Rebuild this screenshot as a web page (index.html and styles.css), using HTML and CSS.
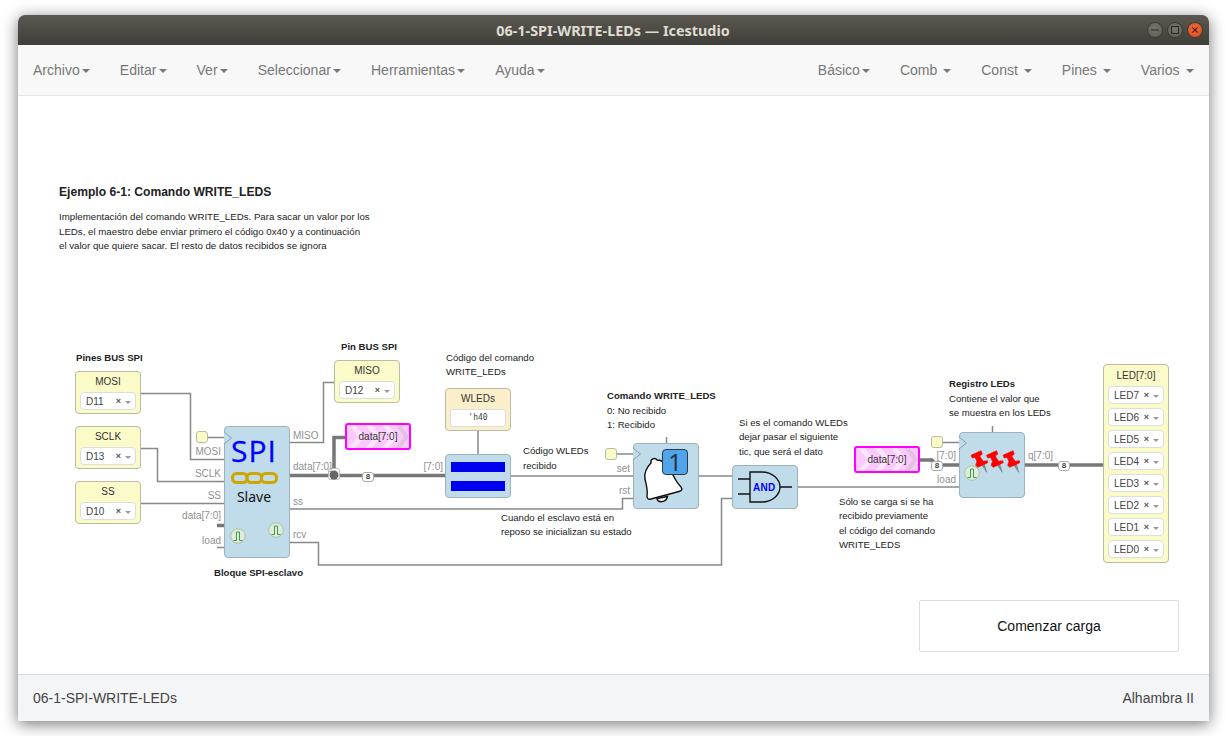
FILE: index.html
```html
<!DOCTYPE html>
<html lang="es">
<head>
<meta charset="utf-8">
<title>06-1-SPI-WRITE-LEDs — Icestudio</title>
<link rel="stylesheet" href="styles.css">
</head>
<body>
<div class="window">
  <header class="titlebar">
    <span class="title">06-1-SPI-WRITE-LEDs — Icestudio</span>
    <div class="winbtns">
      <span class="winbtn"><svg class="winicon" viewBox="0 0 16 16"><path d="M3.500 8h9" stroke="#2e2c28" stroke-width="1.200"/></svg></span>
      <span class="winbtn"><svg class="winicon" viewBox="0 0 16 16"><rect x="4" y="4" width="8" height="8" fill="none" stroke="#2e2c28" stroke-width="1.200"/></svg></span>
      <span class="winbtn close"><svg class="winicon" viewBox="0 0 16 16"><path d="M5 5l6 6M11 5l-6 6" stroke="#3a1a0c" stroke-width="1.200"/></svg></span>
    </div>
  </header>
  <nav class="menubar">
    <ul class="menu">
      <li>Archivo<i class="caret"></i></li>
      <li>Editar<i class="caret"></i></li>
      <li>Ver<i class="caret"></i></li>
      <li>Seleccionar<i class="caret"></i></li>
      <li>Herramientas<i class="caret"></i></li>
      <li>Ayuda<i class="caret"></i></li>
    </ul>
    <ul class="menu right">
      <li class="tight">Básico<i class="caret"></i></li>
      <li>Comb<i class="caret"></i></li>
      <li>Const<i class="caret"></i></li>
      <li>Pines<i class="caret"></i></li>
      <li class="wide">Varios<i class="caret"></i></li>
    </ul>
  </nav>
  <main class="canvas">
    <div class="stage">
      <svg class="wires" viewBox="0 0 1225 736" width="1225" height="736">
        <g class="w">
          <path d="M141 393.500H190.500V459.500H224"/>
          <path d="M141 448.500H157.500V481.500H224"/>
          <path d="M141 503.500H224"/>
          <path d="M207 437.500H224"/>
          <path d="M290 442.500H323.500V382.500H334"/>
          <path d="M290 509H622.500V498.500H633"/>
          <path d="M290 542.500H318.500V565H721.500V498.500H732"/>
          <path d="M511 476H633"/>
          <path d="M478 431V454"/>
          <path d="M616 454H633"/>
          <path d="M666.500 437V443"/>
          <path d="M699 476H732"/>
          <path d="M798 487H959"/>
          <path d="M943 442.500H959"/>
          <path d="M992.500 426V432"/>
          <path d="M217 547.500H224"/>
        </g>
        <g class="bus">
          <path d="M290 475.500H445"/>
          <path d="M334 475V437.500H346"/>
          <path d="M919 460H932L936 465H959"/>
          <path d="M1025 465H1103"/>
          <path d="M217 525.500H224"/>
        </g>
        <rect class="junction-box" x="328.500" y="468.500" width="11" height="11" rx="2"/>
        <circle class="junction" cx="334" cy="475" r="4.500"/>
        <g class="ports end">
          <text x="221" y="455">MOSI</text>
          <text x="221" y="477">SCLK</text>
          <text x="221" y="499">SS</text>
          <text x="221" y="519">data[7:0]</text>
          <text x="221" y="544">load</text>
          <text x="443" y="470">[7:0]</text>
          <text x="630" y="472">set</text>
          <text x="630" y="494">rst</text>
          <text x="956" y="459">[7:0]</text>
          <text x="956" y="483">load</text>
        </g>
        <g class="ports">
          <text x="293" y="439">MISO</text>
          <text x="293" y="470">data[7:0]</text>
          <text x="293" y="505">ss</text>
          <text x="293" y="538">rcv</text>
          <text x="1028" y="459">q[7:0]</text>
        </g>
      </svg>

      <div class="pin n-mosi"><span class="pin-name">MOSI</span><div class="sel"><span>D11</span><b>×</b><i></i></div></div>
      <div class="pin n-sclk"><span class="pin-name">SCLK</span><div class="sel"><span>D13</span><b>×</b><i></i></div></div>
      <div class="pin n-ss"><span class="pin-name">SS</span><div class="sel"><span>D10</span><b>×</b><i></i></div></div>
      <div class="pin n-miso"><span class="pin-name">MISO</span><div class="sel"><span>D12</span><b>×</b><i></i></div></div>

      <div class="pin const n-wleds"><span class="pin-name">WLEDs</span><div class="const-val">'h40</div></div>

      <div class="clk n-clk1"></div>
      <div class="clk n-clk2"></div>
      <div class="clk n-clk3"></div>

      <div class="block n-spi">
        <span class="spi-word">SPI</span>
        <svg class="chain" viewBox="0 0 47 12" width="47" height="12">
          <rect x="1.500" y="1.500" width="14.500" height="9" rx="4"/>
          <rect x="16" y="1.500" width="14.500" height="9" rx="4"/>
          <rect x="30.500" y="1.500" width="15" height="9" rx="4"/>
        </svg>
        <span class="spi-slave">Slave</span>
        <svg class="pulse p-a" viewBox="0 0 16 16"><circle cx="8" cy="8" r="7.300"/><path d="M3.500 12.500H6.500V4H9.500V12.500H12.500"/></svg>
        <svg class="pulse p-b" viewBox="0 0 16 16"><circle cx="8" cy="8" r="7.300"/><path d="M3.500 12.500H6.500V4H9.500V12.500H12.500"/></svg>
        <svg class="tri" viewBox="0 0 9 14"><path d="M0 1L7.500 7L0 13"/></svg>
      </div>

      <div class="block n-demux"><div class="bar"></div><div class="bar"></div></div>

      <div class="block n-bell">
        <svg class="bell" viewBox="0 0 66 66" width="66" height="66">
          <path class="bell-body" d="M23 54.500C24 59 32 59 33.500 52.500Z"/>
          <path class="bell-body" d="M17 19C16 15 21 13 23 16C26 16 29 17 31 20L39 31C42 37 44 40 47 43C49 46 47 47 45 47.500L17 55C14 56 13 54 13 52C14 45 12 40 11 35C10 29 13 23 17 19Z"/>
        </svg>
        <div class="bell-badge">1</div>
        <svg class="tri" viewBox="0 0 9 14"><path d="M0 1L7.500 7L0 13"/></svg>
      </div>

      <div class="block n-and">
        <svg class="gate" viewBox="0 0 66 44" width="66" height="44">
          <path class="gate-line" d="M6 14H18M6 29H18M48 22H60"/>
          <path class="gate-body" d="M18 7H30C40 7 48 14 48 22C48 30 40 37 30 37H18Z"/>
        </svg>
        <span class="and-word">AND</span>
      </div>

      <div class="block n-reg">
        <svg class="pins" viewBox="0 0 66 66" width="66" height="66">
          <defs>
            <g id="pushpin">
              <path class="needle" d="M21.700 31.700L26.700 39.300L24.300 31Z"/>
              <path class="pin-head" d="M11 22.300L21 17.700L22.300 21L19.700 23L23 28.300L27.300 27.700L27.700 29.700L17.700 34.300L15.700 32.300L17 28.300L15 24.300L12.300 25Z"/>
            </g>
          </defs>
          <use href="#pushpin"/>
          <use href="#pushpin" x="15.500"/>
          <use href="#pushpin" x="32"/>
        </svg>
        <svg class="pulse p-c" viewBox="0 0 16 16"><circle cx="8" cy="8" r="7.300"/><path d="M3.500 12.500H6.500V4H9.500V12.500H12.500"/></svg>
        <svg class="tri" viewBox="0 0 9 14"><path d="M0 1L7.500 7L0 13"/></svg>
      </div>

      <div class="pin leds n-leds">
        <span class="pin-name">LED[7:0]</span>
        <div class="sel"><span>LED7</span><b>×</b><i></i></div>
        <div class="sel"><span>LED6</span><b>×</b><i></i></div>
        <div class="sel"><span>LED5</span><b>×</b><i></i></div>
        <div class="sel"><span>LED4</span><b>×</b><i></i></div>
        <div class="sel"><span>LED3</span><b>×</b><i></i></div>
        <div class="sel"><span>LED2</span><b>×</b><i></i></div>
        <div class="sel"><span>LED1</span><b>×</b><i></i></div>
        <div class="sel"><span>LED0</span><b>×</b><i></i></div>
      </div>

      <div class="tag n-tag1"><svg class="chev" viewBox="0 0 60 22" width="62" height="23" preserveAspectRatio="none"><path class="c-w" d="M2 0H8L17 11L8 22H2L11 11Z"/><path class="c-w" d="M18 0H24L33 11L24 22H18L27 11Z"/><path class="c-w" d="M34 0H40L49 11L40 22H34L43 11Z"/><path class="c-g" d="M47 0H52L60 11L52 22H47L55 11Z"/></svg><span>data[7:0]</span></div>
      <div class="tag n-tag2"><svg class="chev" viewBox="0 0 60 22" width="62" height="23" preserveAspectRatio="none"><path class="c-w" d="M2 0H8L17 11L8 22H2L11 11Z"/><path class="c-w" d="M18 0H24L33 11L24 22H18L27 11Z"/><path class="c-w" d="M34 0H40L49 11L40 22H34L43 11Z"/><path class="c-g" d="M47 0H52L60 11L52 22H47L55 11Z"/></svg><span>data[7:0]</span></div>

      <div class="badge n-b1">8</div>
      <div class="badge n-b2">8</div>
      <div class="badge n-b3">8</div>

      <div class="note heading n-h1">Ejemplo 6-1: Comando WRITE_LEDS</div>
      <div class="note intro n-intro">Implementación del comando WRITE_LEDs. Para sacar un valor por los<br>LEDs, el maestro debe enviar primero el código 0x40 y a continuación<br>el valor que quiere sacar. El resto de datos recibidos se ignora</div>
      <div class="note n-c1"><strong>Pines BUS SPI</strong></div>
      <div class="note n-c2"><strong>Pin BUS SPI</strong></div>
      <div class="note n-c3">Código del comando<br>WRITE_LEDs</div>
      <div class="note n-c4"><strong>Bloque SPI-esclavo</strong></div>
      <div class="note n-c5">Código WLEDs<br>recibido</div>
      <div class="note n-c6">Cuando el esclavo está en<br>reposo se inicializan su estado</div>
      <div class="note n-c7"><strong>Comando WRITE_LEDS</strong><br>0: No recibido<br>1: Recibido</div>
      <div class="note n-c8">Si es el comando WLEDs<br>dejar pasar el siguiente<br>tic, que será el dato</div>
      <div class="note n-c9">Sólo se carga si se ha<br>recibido previamente<br>el código del comando<br>WRITE_LEDS</div>
      <div class="note n-c10"><strong>Registro LEDs</strong><br>Contiene el valor que<br>se muestra en los LEDs</div>

      <div class="upload">Comenzar carga</div>
    </div>
  </main>
  <footer class="footer">
    <span>06-1-SPI-WRITE-LEDs</span>
    <span>Alhambra II</span>
  </footer>
</div>
</body>
</html>
```

FILE: styles.css
```css
* { box-sizing: border-box; }
html, body { margin: 0; height: 100%; background: #fff; overflow: hidden; }
body { padding: 15px 16px 15px 18px; font-family: "Liberation Sans", Arial, sans-serif; }

.window {
  height: 706px;
  display: flex;
  flex-direction: column;
  border-radius: 7px 7px 0 0;
  box-shadow: 0 3px 16px rgba(0, 0, 0, .55);
  background: #fff;
}

.titlebar {
  height: 30px;
  flex: none;
  position: relative;
  display: flex;
  align-items: center;
  justify-content: center;
  border-radius: 7px 7px 0 0;
  background: linear-gradient(#5b5851, #403e39);
}
.title { color: #dfdbd2; font: 700 14.400px "Noto Sans", "Open Sans", sans-serif; margin-left: -1px; }
.winbtns { position: absolute; right: 6px; top: 7px; display: flex; gap: 4px; }
.winbtn {
  width: 16px; height: 16px; border-radius: 50%;
  background: radial-gradient(circle at 50% 40%, #77746d, #5f5c55);
  border: 1px solid #3c3a35;
  display: flex; align-items: center; justify-content: center;
}
.winbtn.close { background: radial-gradient(circle at 50% 40%, #ee6a3a, #df4a1c); }
.winicon { width: 14px; height: 14px; display: block; }

.menubar {
  height: 51px;
  flex: none;
  display: flex;
  justify-content: space-between;
  background: #f8f8f8;
  border-bottom: 1px solid #e7e7e7;
}
.menu { list-style: none; margin: 0; padding: 0; display: flex; }
.menu li { padding: 0 15px; line-height: 50px; font-size: 14px; color: #777; white-space: nowrap; }
.caret {
  display: inline-block;
  width: 0; height: 0;
  margin-left: 2.150px;
  vertical-align: middle;
  border-top: 4px solid #777;
  border-left: 4px solid transparent;
  border-right: 4px solid transparent;
}
.menu.right .caret { margin-left: 6px; }
.menu.right .tight .caret { margin-left: 2px; }
.menu.right .wide .caret { margin-left: 6.500px; }

.canvas { flex: 1; position: relative; overflow: hidden; background: #fff; }
.stage { position: absolute; left: -18px; top: -96px; width: 1225px; height: 736px; }

.wires { position: absolute; left: 0; top: 0; }
.w path, .bus path { fill: none; }
.w path { stroke: #888; stroke-width: 1.500; }
.bus path { stroke: #777; stroke-width: 3.500; }
.junction { fill: #666; }
.junction-box { fill: #fff; stroke: #bbb; }
.ports text { font-size: 10px; fill: #909090; }
.ports.end text { text-anchor: end; }

.pin {
  position: absolute;
  width: 66px;
  height: 43px;
  padding: 3px 4px 0;
  display: flex;
  flex-direction: column;
  gap: 4px;
  background: #fbfbca;
  border: 1px solid #bcbca4;
  border-radius: 4px;
}
.pin-name { font-size: 10px; line-height: 13px; text-align: center; color: #333; }
.sel {
  height: 18px;
  flex: none;
  display: flex;
  align-items: center;
  padding: 0 4px 0 5px;
  background: #fff;
  border: 1px solid #ddd;
  border-radius: 4px;
  font-size: 10px;
  color: #444;
}
.sel span { flex: 1; }
.sel b { font-size: 9px; color: #555; margin-right: 4px; }
.sel i {
  width: 0; height: 0;
  margin-top: 2px;
  border-top: 3px solid #999;
  border-left: 3px solid transparent;
  border-right: 3px solid transparent;
}

.const { background: #fbeecb; }
.const-val {
  height: 18px;
  background: #fff;
  border: 1px solid #ddd;
  border-radius: 3px;
  text-align: center;
  font: 8px/16px "DejaVu Sans Mono", monospace;
  color: #444;
}

.n-mosi { left: 75px; top: 371px; }
.n-sclk { left: 75px; top: 426px; }
.n-ss { left: 75px; top: 481px; }
.n-miso { left: 334px; top: 360px; }
.n-wleds { left: 445px; top: 388px; }
.leds { left: 1103px; top: 364px; height: 199px; padding-top: 4px; }

.clk {
  position: absolute;
  width: 12px; height: 12px;
  background: #fbfbca;
  border: 1px solid #bcbc9c;
  border-radius: 3px;
}
.n-clk1 { left: 196px; top: 431px; }
.n-clk2 { left: 605px; top: 448px; }
.n-clk3 { left: 931px; top: 436px; }

.block {
  position: absolute;
  width: 66px;
  background: #c0dcea;
  border: 1px solid #9fb1ba;
  border-radius: 4px;
}
.n-spi { left: 224px; top: 426px; height: 132px; display: flex; flex-direction: column; align-items: center; }
.n-demux { left: 445px; top: 454px; height: 44px; display: flex; flex-direction: column; align-items: center; gap: 9px; padding-top: 7px; }
.n-bell { left: 633px; top: 443px; height: 66px; }
.n-and { left: 732px; top: 465px; height: 44px; }
.n-reg { left: 959px; top: 432px; height: 66px; }

.tri { position: absolute; left: -1px; top: 4px; width: 9px; height: 14px; fill: #c0dcea; stroke: #8d9ca3; stroke-width: 1; }
.n-bell .tri, .n-reg .tri { top: 3px; }

.spi-word { margin: 5px 6px 0 0; font: 30px/37px "Open Sans", sans-serif; letter-spacing: 1px; color: #00f; -webkit-text-stroke: .3px #00f; }
.chain { margin: 3px 6px 0 0; fill: none; stroke: #cda700; stroke-width: 3; display: block; }
.spi-slave { margin: 4px 6px 0 0; font: 14px/18px "Noto Sans", sans-serif; color: #111; }

.pulse { position: absolute; width: 16px; height: 16px; fill: none; }
.pulse circle { fill: #e0ebe0; stroke: #a3c4a3; stroke-width: 1; }
.pulse path { stroke: #3f9a3f; stroke-width: 1; }
.p-a { left: 5px; top: 101px; }
.p-b { left: 43px; top: 95px; }
.p-c { left: 4px; top: 32px; }

.bar { width: 54px; height: 10px; background: #0000f0; flex: none; }

.bell { position: absolute; left: 0; top: 0; }
.bell-body { fill: #fff; stroke: #111; stroke-width: 1.400; }
.bell-badge {
  position: absolute;
  left: 28px; top: 5px;
  width: 26px; height: 26px;
  background: #50a5ea;
  border: 1.500px solid #2a3a48;
  border-radius: 4px;
  text-align: center;
  font: 24px/23px "Noto Sans", sans-serif;
  color: #29333d;
}

.gate { position: absolute; left: -1px; top: -1px; }
.gate-line { stroke: #111; stroke-width: 1.400; fill: none; }
.gate-body { stroke: #111; stroke-width: 1.400; fill: #c0dcea; }
.and-word { position: absolute; left: 20px; top: 15px; font-size: 10px; line-height: 13px; font-weight: 700; color: #00f; letter-spacing: .3px; }

.pins { position: absolute; left: 0; top: 0; fill: #f00; }
.pin-head { stroke: #f00; stroke-width: .7; stroke-linejoin: round; }
.needle { fill: #888; stroke: #777; stroke-width: .6; }

.tag {
  position: absolute;
  width: 66px; height: 27px;
  background: #fcc9fc;
  border: 2px solid #f0f;
  border-radius: 3px;
  overflow: hidden;
  display: flex; align-items: center; justify-content: center;
  font-size: 10px;
  color: #333;
}
.tag span { position: relative; }
.chev { position: absolute; left: 0; top: 0; }
.c-w { fill: #fde6fd; }
.c-g { fill: #e2c2e2; }
.n-tag1 { left: 345px; top: 423px; }
.n-tag2 { left: 854px; top: 446px; }

.badge {
  position: absolute;
  width: 12px; height: 10px;
  background: #fff;
  border: 1px solid #aaa;
  border-radius: 3px;
  text-align: center;
  font: 700 8px/8px "Liberation Sans", sans-serif;
  color: #444;
}
.n-b1 { left: 362px; top: 472px; }
.n-b2 { left: 931px; top: 461px; }
.n-b3 { left: 1058px; top: 461px; }

.note { position: absolute; font-size: 9.600px; line-height: 14.500px; color: #222; white-space: nowrap; }
.note strong { font-weight: 700; }
.heading { font-size: 12.100px; font-weight: 700; line-height: 14px; }
.intro { font-size: 9.700px; }
.n-h1 { left: 59px; top: 185px; }
.n-intro { left: 59px; top: 210px; }
.n-c1 { left: 76px; top: 351px; }
.n-c2 { left: 341px; top: 340px; }
.n-c3 { left: 446px; top: 350.500px; }
.n-c4 { left: 214px; top: 566px; }
.n-c5 { left: 523px; top: 444px; }
.n-c6 { left: 501px; top: 510.500px; }
.n-c7 { left: 607px; top: 389px; }
.n-c8 { left: 739px; top: 415.500px; }
.n-c9 { left: 839px; top: 494.500px; }
.n-c10 { left: 949px; top: 377px; }

.upload {
  position: absolute;
  left: 919px; top: 600px;
  width: 260px; height: 52px;
  border: 1px solid #ddd;
  border-radius: 2px;
  background: #fff;
  display: flex; align-items: center; justify-content: center;
  font-size: 14px;
  color: #111;
}

.footer {
  height: 47px;
  flex: none;
  display: flex;
  align-items: center;
  justify-content: space-between;
  padding: 0 15px;
  background: #f4f5f7;
  border-top: 1px solid #d5dbe1;
  font-size: 14px;
  color: #444;
}
```
